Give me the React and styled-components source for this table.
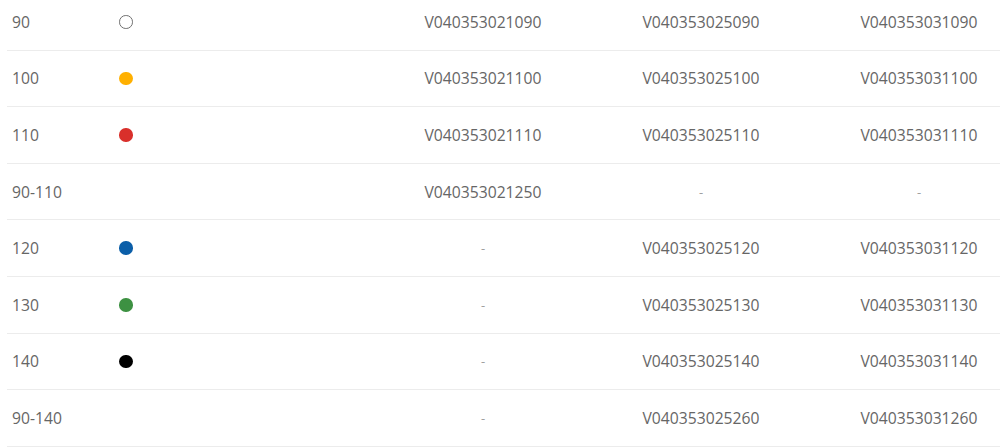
import React from "react";
import styled, { createGlobalStyle } from "styled-components";

const Global = createGlobalStyle`
  html, body { margin: 0; padding: 0; background: #fff; overflow: hidden; }
  body { font-family: "Open Sans", "Noto Sans", sans-serif; }
`;

const Table = styled.div`
  margin: -6px 0 0 7px;
  width: 1021px;
  display: flex;
  flex-direction: column;
  font-size: 15.7px;
  color: #666;
`;

const Row = styled.div`
  display: grid;
  grid-template-columns: 105px 262px 218px 218px 218px;
  align-items: center;
  height: 56.6px;
  box-sizing: border-box;
  border-bottom: 1px solid #ececec;
`;

const Size = styled.div`
  padding-left: 5px;
  line-height: 20px;
`;

const DotCell = styled.div`
  display: flex;
  align-items: center;
  padding-left: 7px;
`;

const Dot = styled.span`
  width: 13.5px;
  height: 13.5px;
  border-radius: 50%;
  box-sizing: border-box;
  background: ${(p) => p.$color};
  border: ${(p) => (p.$outline ? "1px solid #6f6f6f" : "none")};
`;

const Code = styled.div`
  text-align: center;
  line-height: 20px;
  color: ${(p) => (p.$empty ? "#a0a0a0" : "#666")};
  font-size: ${(p) => (p.$empty ? "13px" : "inherit")};
`;

const rows = [
  { size: "90", color: "#fff", outline: true, codes: ["V040353021090", "V040353025090", "V040353031090"] },
  { size: "100", color: "#ffb000", codes: ["V040353021100", "V040353025100", "V040353031100"] },
  { size: "110", color: "#d9302b", codes: ["V040353021110", "V040353025110", "V040353031110"] },
  { size: "90-110", codes: ["V040353021250", "-", "-"] },
  { size: "120", color: "#0b5ea8", codes: ["-", "V040353025120", "V040353031120"] },
  { size: "130", color: "#3d9142", codes: ["-", "V040353025130", "V040353031130"] },
  { size: "140", color: "#000", codes: ["-", "V040353025140", "V040353031140"] },
  { size: "90-140", codes: ["-", "V040353025260", "V040353031260"] },
];

export default function App() {
  return (
    <>
      <Global />
      <Table>
        {rows.map((r) => (
          <Row key={r.size}>
            <Size>{r.size}</Size>
            <DotCell>{r.color && <Dot $color={r.color} $outline={r.outline} />}</DotCell>
            {r.codes.map((c, i) => (
              <Code key={i} $empty={c === "-"}>{c}</Code>
            ))}
          </Row>
        ))}
      </Table>
    </>
  );
}
